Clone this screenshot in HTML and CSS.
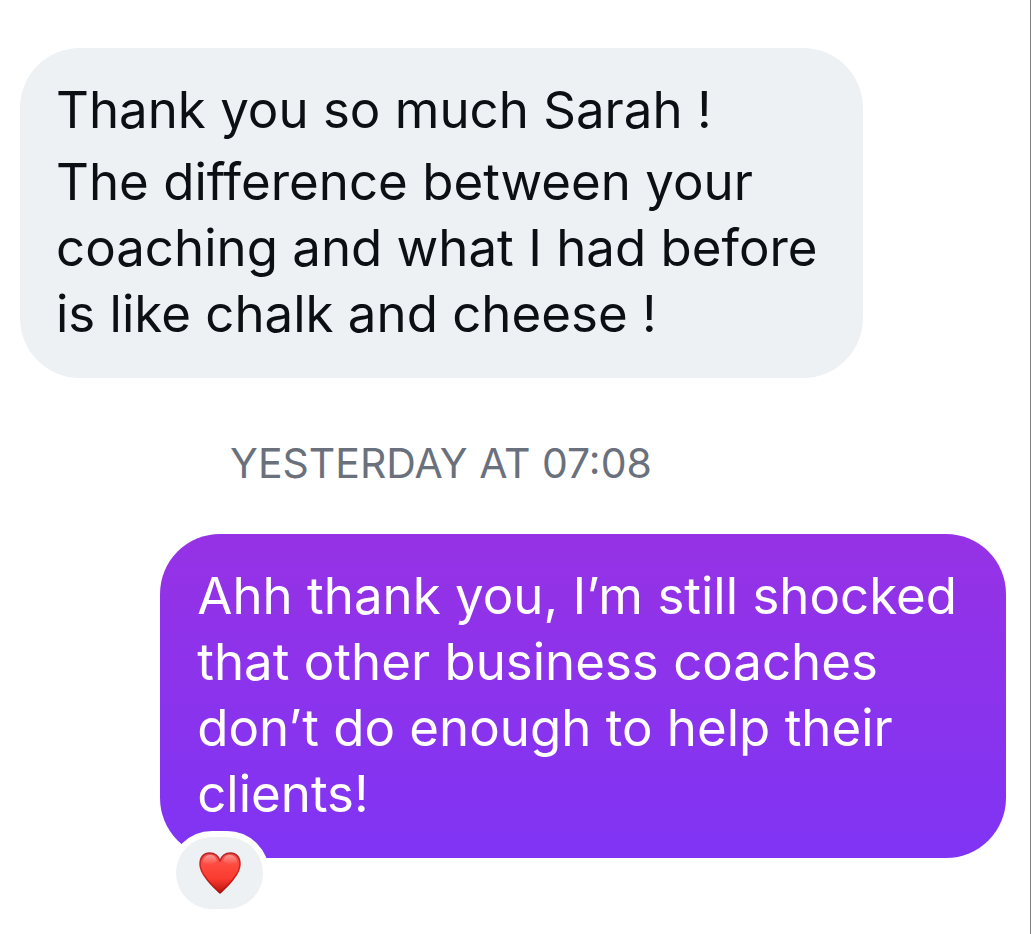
FILE: index.html
```html
<!DOCTYPE html>
<html lang="en">
<head>
  <meta charset="UTF-8">
  <meta name="viewport" content="width=device-width, initial-scale=1.0">
  <title>Messages</title>
  <link rel="stylesheet" href="styles.css">
</head>
<body>
  <main class="chat">
    <div class="message received">
      <p>Thank you so much Sarah !</p>
      <p>The difference between your<br>coaching and what I had before<br>is like chalk and cheese !</p>
    </div>

    <time class="timestamp">YESTERDAY AT 07:08</time>

    <div class="message sent">
      <p>Ahh thank you, I’m still shocked<br>that other business coaches<br>don’t do enough to help their<br>clients!</p>
      <div class="reaction">
        <svg class="heart" viewBox="0 0 44 44" role="img" aria-label="Heart">
          <defs>
            <linearGradient id="heartFill" x1="0" y1="0" x2="0" y2="1">
              <stop offset="0" stop-color="#f0524c"/>
              <stop offset="0.3" stop-color="#ff4a3f"/>
              <stop offset="0.65" stop-color="#f93a2f"/>
              <stop offset="1" stop-color="#b9120c"/>
            </linearGradient>
            <linearGradient id="heartEdge" x1="0" y1="0" x2="0" y2="1">
              <stop offset="0" stop-color="#b3262a"/>
              <stop offset="0.5" stop-color="#d3241f"/>
              <stop offset="1" stop-color="#a90f0c"/>
            </linearGradient>
            <linearGradient id="heartShine" x1="0" y1="0" x2="0" y2="1">
              <stop offset="0" stop-color="#fff" stop-opacity="0.4"/>
              <stop offset="1" stop-color="#fff" stop-opacity="0"/>
            </linearGradient>
          </defs>
          <path d="M22 42C19 39 12 33 8 27C4 22 2 18 2 13C2 6 6 2 11.500 2C16.500 2 20.500 5 22 10C23.500 5 27.500 2 32.500 2C38 2 42 6 42 13C42 18 40 22 36 27C32 33 25 39 22 42Z" fill="url(#heartFill)" stroke="url(#heartEdge)" stroke-width="1.500" stroke-linejoin="round"/>
          <path d="M5 12C5 7 8 4 12 4C16 4 18 6 19 10C15 14 8 15 5 12Z" fill="url(#heartShine)"/>
          <path d="M39 12C39 7 36 4 32 4C28 4 26 6 25 10C29 14 36 15 39 12Z" fill="url(#heartShine)"/>
        </svg>
      </div>
    </div>
  </main>
</body>
</html>
```

FILE: styles.css
```css
* {
  box-sizing: border-box;
}

body {
  margin: 0;
  background-color: #fff;
  font-family: Inter, "Liberation Sans", sans-serif;
}

.chat {
  display: flex;
  flex-direction: column;
  min-height: 100vh;
  padding: 48px 24px 76px 20px;
  border-right: 1px solid #7f7f7f;
}

.message {
  position: relative;
  border-radius: 60px;
  font-size: 51px;
  line-height: 66px;
}

.message p {
  margin: 0;
}

.received {
  align-self: flex-start;
  padding: 29px 45px 31px 36px;
  background-color: #edf1f4;
  color: #0c1014;
}

.received p + p {
  margin-top: 6px;
}

.timestamp {
  margin: 59px 0 45px;
  padding-right: 144px;
  color: #6a717c;
  font-size: 41px;
  line-height: 52px;
  text-align: center;
}

.sent {
  align-self: flex-end;
  padding: 29px 49px 31px 37px;
  background-image: linear-gradient(#9632e5, #8034f4);
  color: #fff;
}

.reaction {
  position: absolute;
  bottom: -57px;
  left: 10px;
  display: flex;
  align-items: center;
  justify-content: center;
  width: 99px;
  height: 84px;
  border: 6px solid #fff;
  border-radius: 42px;
  background-color: #edf1f4;
}

.heart {
  width: 44px;
  height: 44px;
}
```
